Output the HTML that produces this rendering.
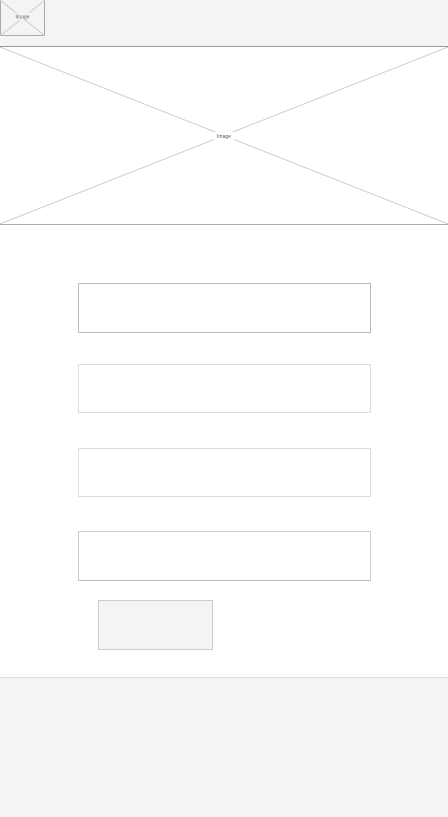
<!DOCTYPE html>
<html><head><style>
body{margin:0;width:448px;height:817px;position:relative;background:#fff;font-family:"Liberation Sans",sans-serif;overflow:hidden}
.a{position:absolute;box-sizing:border-box}
</style></head><body>
<div class="a" style="left:0;top:0;width:448px;height:47px;background:#f4f4f4;border-bottom:1px solid #999"></div>
<svg class="a" style="left:0;top:0" width="45" height="36"><rect x="0.5" y="-1" width="44" height="36.5" fill="none" stroke="#aaa"/><line x1="0" y1="0" x2="45" y2="36" stroke="#ccc"/><line x1="45" y1="0" x2="0" y2="36" stroke="#ccc"/><rect x="14" y="13" width="17" height="7" fill="#f4f4f4"/><text x="22.5" y="18.5" font-size="5" text-anchor="middle" fill="#666" font-family="Liberation Sans">Image</text></svg>
<svg class="a" style="left:0;top:47px" width="448" height="178"><line x1="0" y1="0" x2="448" y2="177" stroke="#bbb" stroke-width="0.7"/><line x1="448" y1="0" x2="0" y2="177" stroke="#bbb" stroke-width="0.7"/><rect x="214" y="85" width="20" height="8" fill="#fff"/><text x="224" y="91" font-size="5" text-anchor="middle" fill="#555" font-family="Liberation Sans">Image</text><line x1="0" y1="177.5" x2="448" y2="177.5" stroke="#aaa"/></svg>
<div class="a" style="left:78px;top:283px;width:293px;height:50px;border:1px solid #bbb"></div>
<div class="a" style="left:78px;top:364px;width:293px;height:49px;border:1px solid #ddd"></div>
<div class="a" style="left:78px;top:448px;width:293px;height:49px;border:1px solid #ddd"></div>
<div class="a" style="left:78px;top:531px;width:293px;height:50px;border:1px solid #ccc;border-bottom-color:#bbb"></div>
<div class="a" style="left:98px;top:600px;width:115px;height:50px;background:#f4f4f4;border:1px solid #ccc"></div>
<div class="a" style="left:0;top:677px;width:448px;height:140px;background:#f4f4f4;border-top:1px solid #ddd"></div>
</body></html>
